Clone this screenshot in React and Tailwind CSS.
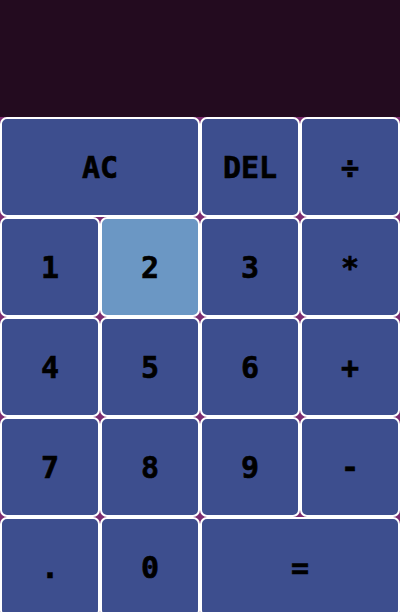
const KEYS = [
  { label: 'AC', span: true },
  { label: 'DEL' },
  { label: '÷' },
  { label: '1' },
  { label: '2', active: true },
  { label: '3' },
  { label: '*' },
  { label: '4' },
  { label: '5' },
  { label: '6' },
  { label: '+' },
  { label: '7' },
  { label: '8' },
  { label: '9' },
  { label: '-' },
  { label: '.' },
  { label: '0' },
  { label: '=', span: true },
]

export default function App() {
  return (
    <div className="w-[400px] h-[612px] overflow-hidden bg-[#231020] font-['DejaVu_Sans_Mono',monospace]">
      <div className="h-[117px] bg-[#230b1f]" />
      <div className="grid grid-cols-4 bg-[#7c2c70]">
        {KEYS.map(k => (
          <button
            key={k.label}
            className={`h-[100px] border-2 border-white rounded-[7px] text-[30px] font-bold text-black [-webkit-text-stroke:0.6px_black]
              ${k.span ? 'col-span-2' : ''}
              ${k.active ? 'bg-[#6b97c4]' : 'bg-[#3d4e8e]'}`}
          >
            {k.label}
          </button>
        ))}
      </div>
    </div>
  )
}
